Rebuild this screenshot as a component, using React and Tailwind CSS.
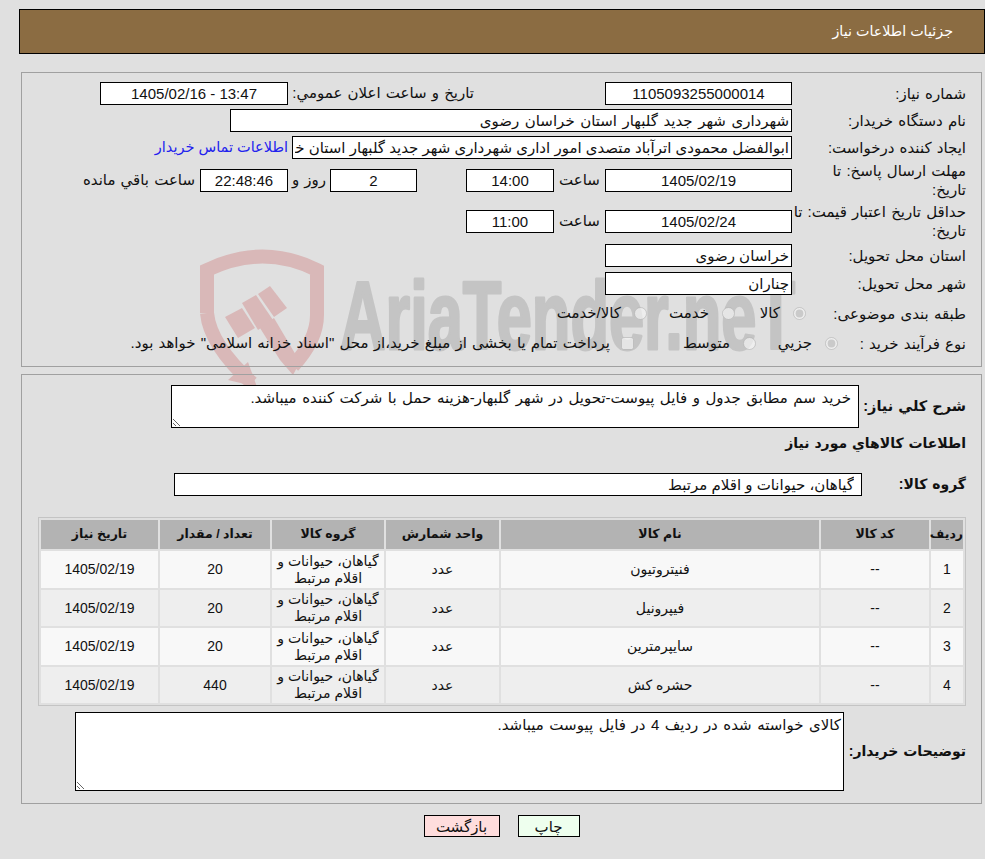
import React from 'react';

const rows = [
  { id: 1, name: 'فنیتروتیون', qty: '20' },
  { id: 2, name: 'فیپرونیل', qty: '20' },
  { id: 3, name: 'سایپرمترین', qty: '20' },
  { id: 4, name: 'حشره کش', qty: '440' },
];

// Aria Tender watermark behind the form
function Watermark() {
  return (
    <svg className="absolute left-0 top-0 pointer-events-none" width="985" height="859" viewBox="0 0 985 859">
      <g fill="#d9b8b8" stroke="none">
        <path d="M207 313 V270 Q263 243 317 270 V315 Q317 340 293 366 M207 313 Q210 345 252 383" fill="none" stroke="#d9b8b8" strokeWidth="14" />
        <polygon points="248,362 257,387 228,380" />
        <polygon points="225,317 242,308 255,328 238,338" />
        <polygon points="242,303 256,295 273,320 258,330" />
        <polygon points="258,294 270,286 287,308 274,317" />
        <polygon points="260,328 274,318 300,362 293,375 280,360" />
      </g>
      <text direction="ltr" x="340" y="349" textLength="455" lengthAdjust="spacingAndGlyphs" fontSize="96" fontWeight="700" fontFamily="Liberation Sans, sans-serif" fill="#c4c4c4" stroke="#c4c4c4" strokeWidth="3" strokeLinejoin="round">
        AriaTender.neT
      </text>
    </svg>
  );
}

function Field({ value, className = '' }) {
  return (
    <input
      readOnly
      value={value}
      className={`h-[23px] border border-black bg-white px-[2px] text-center text-[#111] outline-none ${className}`}
    />
  );
}

function Label({ children, className = 'w-[174px]' }) {
  return <div className={`shrink-0 leading-[19px] ${className}`}>{children}</div>;
}

function Radio({ checked, label, className = '' }) {
  return (
    <label className={`flex items-center ${className}`}>
      <input type="radio" disabled checked={checked} readOnly className="m-0 size-[13px]" />
      <span className="mr-[13px]">{label}</span>
    </label>
  );
}

export default function App() {
  return (
    <div dir="rtl" className="relative h-[859px] overflow-hidden bg-[#e0e0e0] font-['Liberation_Sans','DejaVu_Sans',sans-serif] text-[15px] text-[#111] [word-spacing:1px]">
      <Watermark />
      <div className="relative pt-[9px] pl-[19px]">
        <div className="flex h-[45px] items-center border border-black bg-[#8b6c42] pr-[31px] text-[14.3px] text-white [word-spacing:0]">
          جزئیات اطلاعات نیاز
        </div>

        <div className="ml-[2px] mr-[3px] mt-[18px] h-[295px] border border-[#a0a0a0] pr-[15px] pt-[9px]">
          <div className="flex h-[23px] items-center">
            <Label>شماره نیاز:</Label>
            <Field value="1105093255000014" className="w-[187px]" />
            <div className="mr-[131px] w-[186px] whitespace-nowrap">تاريخ و ساعت اعلان عمومي:</div>
            <Field value="13:47 - 1405/02/16" className="w-[188px]" />
          </div>
          <div className="mt-[4px] flex h-[23px] items-center">
            <Label>نام دستگاه خریدار:</Label>
            <Field value="شهرداری شهر جدید گلبهار استان خراسان رضوی" className="w-[562px] text-right [word-spacing:1.35px]" />
          </div>
          <div className="mt-[4px] flex h-[23px] items-center">
            <Label>ایجاد کننده درخواست:</Label>
            <Field value="ابوالفضل محمودی اترآباد متصدی امور اداری شهرداری شهر جدید گلبهار استان خراسان رضوی" className="w-[500px] text-right" />
            <a href="#" className="mr-[4px] mt-[1px] text-[14.5px] text-[#2222ee] [word-spacing:0]">اطلاعات تماس خریدار</a>
          </div>
          <div className="mt-[2px] flex h-[38px] items-center">
            <Label className="w-[174px] pl-[30px]">مهلت ارسال پاسخ: تا تاریخ:</Label>
            <Field value="1405/02/19" className="w-[187px]" />
            <div className="w-[51px] text-center">ساعت</div>
            <Field value="14:00" className="w-[88px]" />
            <div className="w-[49px]" />
            <Field value="2" className="w-[87px]" />
            <div className="w-[42px] text-center">روز و</div>
            <Field value="22:48:46" className="w-[88px] bg-[#ffffe8]" />
            <div className="mr-[5px]">ساعت باقي مانده</div>
          </div>
          <div className="mt-[3px] flex h-[38px] items-center">
            <Label>حداقل تاریخ اعتبار قیمت: تا تاریخ:</Label>
            <Field value="1405/02/24" className="w-[187px]" />
            <div className="w-[51px] text-center">ساعت</div>
            <Field value="11:00" className="w-[88px]" />
          </div>
          <div className="mt-[4px] flex h-[23px] items-center">
            <Label>استان محل تحویل:</Label>
            <Field value="خراسان رضوی" className="w-[187px] text-right" />
          </div>
          <div className="mt-[5px] flex h-[23px] items-center">
            <Label>شهر محل تحویل:</Label>
            <Field value="چناران" className="w-[187px] text-right" />
          </div>
          <div className="mt-[7px] flex h-[23px] items-center">
            <Label className="w-[160px]">طبقه بندی موضوعی:</Label>
            <Radio checked label="کالا" className="w-[71px]" />
            <Radio checked={false} label="خدمت" className="w-[88px]" />
            <Radio checked={false} label="کالا/خدمت" />
          </div>
          <div className="mt-[7px] flex h-[23px] items-center">
            <Label className="w-[128px]">نوع فرآیند خرید :</Label>
            <Radio checked label="جزيي" className="w-[82px]" />
            <Radio checked={false} label="متوسط" className="w-[122px]" />
            <input type="checkbox" disabled className="m-0 size-[13px]" />
            <span className="mr-[11px] whitespace-nowrap">پرداخت تمام یا بخشی از مبلغ خرید،از محل "اسناد خزانه اسلامی" خواهد بود.</span>
          </div>
        </div>

        <div className="ml-[2px] mr-[3px] mt-[7px] h-[430px] border border-[#a0a0a0] pr-[15px] pt-[10px]">
          <div className="flex h-[43px] items-center font-bold">
            <div className="w-[107px] shrink-0 text-[14.5px]">شرح كلي نیاز:</div>
            <textarea
              readOnly
              defaultValue="خرید سم مطابق جدول و فایل پیوست-تحویل در شهر گلبهار-هزینه حمل با شرکت کننده میباشد."
              className="h-[43px] w-[688px] border border-black bg-white px-[7px] py-[1px] font-normal text-[#111] outline-none [word-spacing:1.35px]"
            />
          </div>
          <div className="flex h-[30px] items-center text-[14px] font-bold">اطلاعات كالاهاي مورد نیاز</div>
          <div className="mt-[15px] flex h-[23px] items-center">
            <div className="w-[104px] shrink-0 text-[14px] font-bold">گروه کالا:</div>
            <Field value="گیاهان، حیوانات و اقلام مرتبط" className="w-[688px] px-[7px] text-right [word-spacing:0]" />
          </div>
          <table className="ml-[14px] mt-[21px] w-[928px] table-fixed border-separate border-spacing-[2px] border border-[#c4c4c4] text-center text-[14px] [word-spacing:0]">
            <colgroup>
              <col className="w-[32px]" />
              <col className="w-[108px]" />
              <col className="w-[318px]" />
              <col className="w-[113px]" />
              <col className="w-[112px]" />
              <col className="w-[110px]" />
              <col />
            </colgroup>
            <thead>
              <tr className="h-[29px] bg-[#b3b3b3] text-[12.5px]">
                <th>ردیف</th>
                <th>کد کالا</th>
                <th>نام کالا</th>
                <th>واحد شمارش</th>
                <th>گروه کالا</th>
                <th>تعداد / مقدار</th>
                <th>تاریخ نیاز</th>
              </tr>
            </thead>
            <tbody>
              {rows.map((r, i) => (
                <tr key={r.id} className={i % 2 === 0 ? 'h-[37px] bg-[#f8f8f8]' : 'h-[36px] bg-[#eeeeee]'}>
                  <td>{r.id}</td>
                  <td>--</td>
                  <td>{r.name}</td>
                  <td>عدد</td>
                  <td className="leading-[17px]">گیاهان، حیوانات و اقلام مرتبط</td>
                  <td>{r.qty}</td>
                  <td>1405/02/19</td>
                </tr>
              ))}
            </tbody>
          </table>
          <div className="mt-[6px] flex h-[79px] items-center">
            <div className="w-[122px] shrink-0 whitespace-nowrap text-[14px] font-bold">توضیحات خریدار:</div>
            <textarea
              readOnly
              defaultValue="کالای خواسته شده در ردیف 4 در فایل پیوست میباشد."
              className="h-[79px] w-[769px] border border-black bg-white px-[2px] py-[1px] outline-none [word-spacing:1.35px]"
            />
          </div>
        </div>

        <div className="mt-[11px] flex justify-center gap-[18px] pr-[1px]">
          <button className="h-[22px] w-[62px] border border-black bg-[#eeffee]">چاپ</button>
          <button className="h-[22px] w-[76px] border border-black bg-[#ffdddd]">بازگشت</button>
        </div>
      </div>
    </div>
  );
}
